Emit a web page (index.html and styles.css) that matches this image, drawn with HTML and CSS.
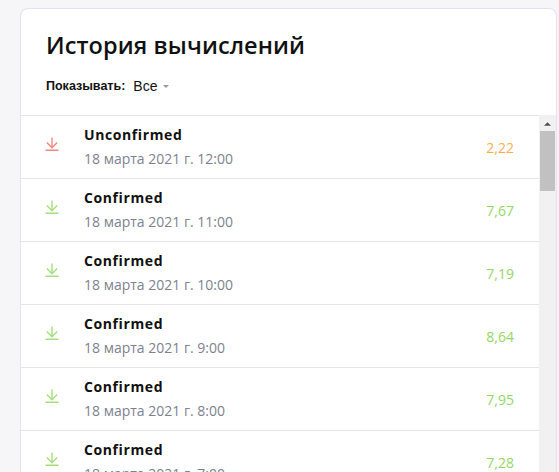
FILE: index.html
```html
<!DOCTYPE html>
<html lang="ru">
<head>
<meta charset="utf-8">
<title>История вычислений</title>
<link rel="stylesheet" href="styles.css">
</head>
<body>
<div class="card">
  <div class="header">
    <h1 class="title">История вычислений</h1>
    <div class="filter">
      <span class="filter-label">Показывать:</span>
      <span class="filter-value">Все</span>
      <span class="caret"></span>
    </div>
  </div>
  <div class="body">
    <ul class="list">
      <li class="row">
        <svg class="icon red" viewBox="0 0 14 14"><path d="M7 0.5V11M1.8 5.6L7 10.8L12.2 5.6M0.5 13.2H13.5"/></svg>
        <div class="info"><div class="status">Unconfirmed</div><div class="date">18 марта 2021 г. 12:00</div></div>
        <div class="value orange">2,22</div>
      </li>
      <li class="row">
        <svg class="icon green" viewBox="0 0 14 14"><path d="M7 0.5V11M1.8 5.6L7 10.8L12.2 5.6M0.5 13.2H13.5"/></svg>
        <div class="info"><div class="status">Confirmed</div><div class="date">18 марта 2021 г. 11:00</div></div>
        <div class="value lime">7,67</div>
      </li>
      <li class="row">
        <svg class="icon green" viewBox="0 0 14 14"><path d="M7 0.5V11M1.8 5.6L7 10.8L12.2 5.6M0.5 13.2H13.5"/></svg>
        <div class="info"><div class="status">Confirmed</div><div class="date">18 марта 2021 г. 10:00</div></div>
        <div class="value lime">7,19</div>
      </li>
      <li class="row">
        <svg class="icon green" viewBox="0 0 14 14"><path d="M7 0.5V11M1.8 5.6L7 10.8L12.2 5.6M0.5 13.2H13.5"/></svg>
        <div class="info"><div class="status">Confirmed</div><div class="date">18 марта 2021 г. 9:00</div></div>
        <div class="value lime">8,64</div>
      </li>
      <li class="row">
        <svg class="icon green" viewBox="0 0 14 14"><path d="M7 0.5V11M1.8 5.6L7 10.8L12.2 5.6M0.5 13.2H13.5"/></svg>
        <div class="info"><div class="status">Confirmed</div><div class="date">18 марта 2021 г. 8:00</div></div>
        <div class="value lime">7,95</div>
      </li>
      <li class="row">
        <svg class="icon green" viewBox="0 0 14 14"><path d="M7 0.5V11M1.8 5.6L7 10.8L12.2 5.6M0.5 13.2H13.5"/></svg>
        <div class="info"><div class="status">Confirmed</div><div class="date">18 марта 2021 г. 7:00</div></div>
        <div class="value lime">7,28</div>
      </li>
    </ul>
    <div class="scrollbar">
      <div class="scroll-btn"><svg viewBox="0 0 8 5"><path d="M0 5L4 1L8 5Z"/></svg></div>
      <div class="scroll-thumb"></div>
    </div>
  </div>
</div>
</body>
</html>
```

FILE: styles.css
```css
html, body {
  margin: 0;
  padding: 0;
  height: 100%;
  overflow: hidden;
}
body {
  background: #f6f6f8;
  font-family: "Open Sans", "Noto Sans", sans-serif;
}
.card {
  margin: 8px 2px 0 20px;
  height: calc(100vh - 8px);
  box-sizing: border-box;
  background: #fff;
  border: 1px solid #e3e1f4;
  border-bottom: none;
  border-radius: 8px 8px 0 0;
  overflow: hidden;
  display: flex;
  flex-direction: column;
}
.header {
  height: 106px;
  box-sizing: border-box;
  padding: 21px 25px 0;
}
.title {
  margin: 0;
  font-size: 23.5px;
  line-height: 30px;
  font-weight: 600;
  letter-spacing: 0.1px;
  color: #111;
}
.filter {
  margin-top: 16px;
  display: flex;
  align-items: center;
  height: 20px;
}
.filter-label {
  font-family: "Liberation Sans", Arial, sans-serif;
  font-weight: 700;
  font-size: 12.5px;
  color: #111;
}
.filter-value {
  font-family: "Liberation Sans", Arial, sans-serif;
  font-size: 14px;
  color: #111;
  margin-left: 8px;
}
.caret {
  margin-left: 6px;
  width: 0;
  height: 0;
  border-left: 3px solid transparent;
  border-right: 3px solid transparent;
  border-top: 3px solid #9a9a9a;
}
.body {
  flex: 1;
  display: flex;
  min-height: 0;
}
.list {
  flex: 1;
  margin: 0;
  padding: 0;
  list-style: none;
}
.row {
  display: flex;
  align-items: center;
  height: 62px;
  border-top: 1px solid #e4e3ef;
  padding: 0 25px 0 24px;
}
.icon {
  width: 14px;
  height: 14px;
  flex: none;
  align-self: flex-start;
  margin-top: 21px;
  fill: none;
  stroke-width: 1.4;
}
.icon.red { stroke: #f8887c; }
.icon.green { stroke: #a5df7c; }
.info {
  flex: 1;
  margin-left: 25px;
}
.status {
  font-weight: 700;
  font-size: 14px;
  line-height: 24px;
  letter-spacing: 0.6px;
  color: #111;
}
.date {
  font-size: 14px;
  line-height: 24px;
  color: #7e828f;
}
.value {
  font-size: 14px;
}
.orange { color: #fbb04e; }
.lime { color: #93d767; }
.scrollbar {
  width: 17px;
  flex: none;
  background: #f1f1f1;
  display: flex;
  flex-direction: column;
}
.scroll-btn {
  height: 16px;
  display: flex;
  align-items: center;
  justify-content: center;
}
.scroll-btn svg {
  width: 7px;
  height: 5px;
  fill: #505050;
}
.scroll-thumb {
  height: 60px;
  background: #c1c1c1;
  margin: 0 1px;
}
```
